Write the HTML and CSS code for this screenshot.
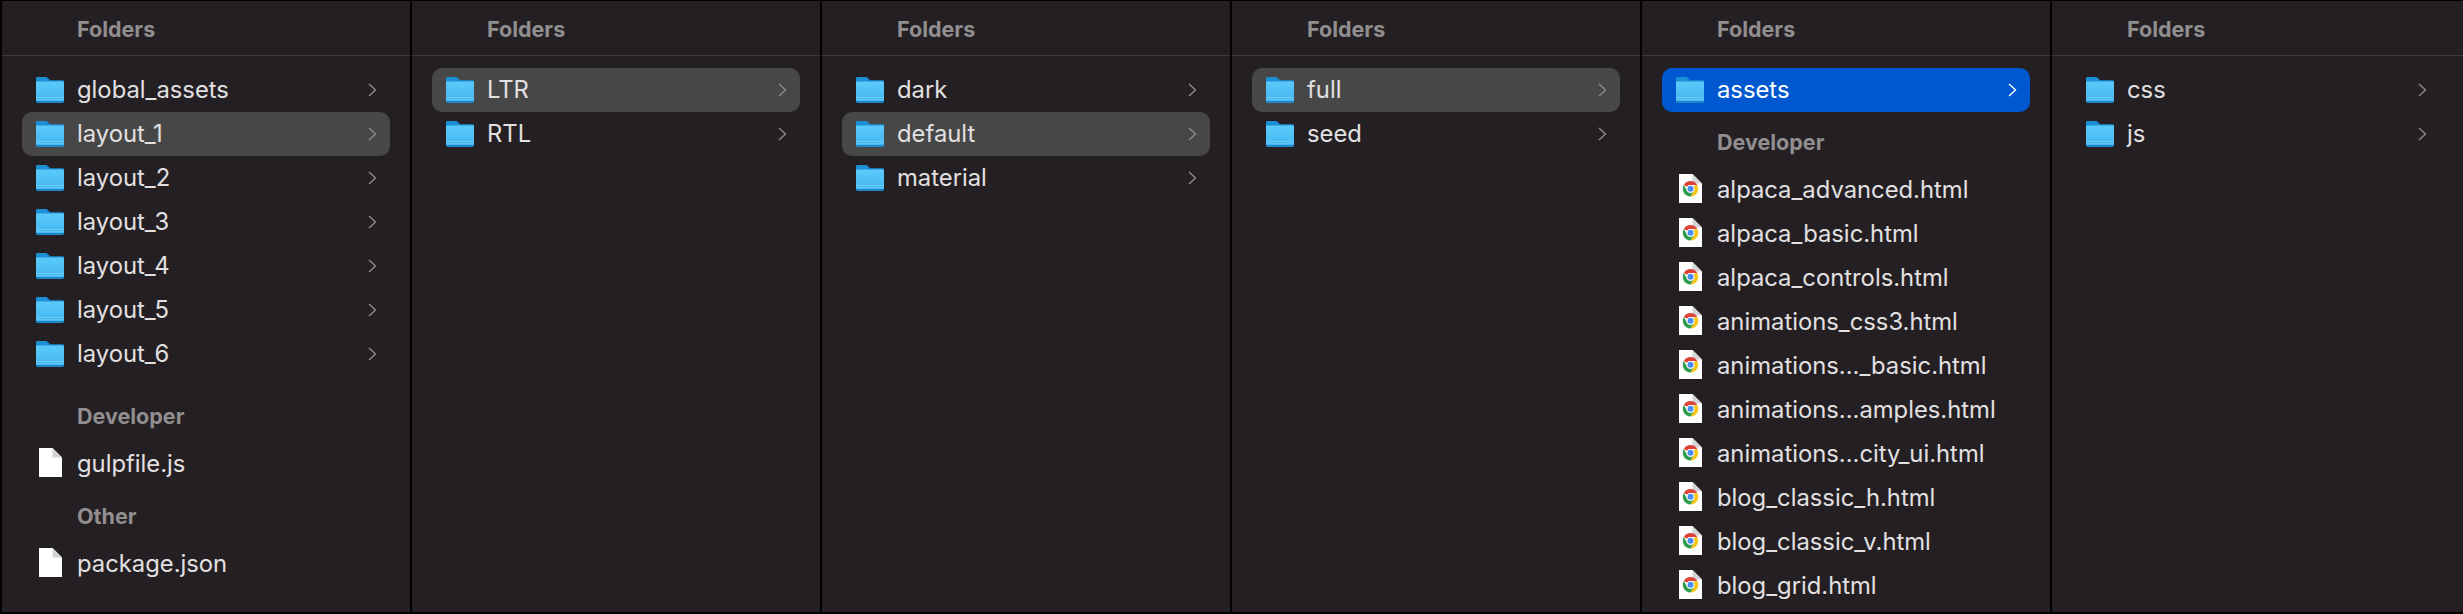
FILE: index.html
```html
<!DOCTYPE html>
<html lang="en">
<head>
<meta charset="utf-8">
<title>Folders</title>
<link rel="stylesheet" href="styles.css">
</head>
<body>
<svg class="defs" width="0" height="0" aria-hidden="true">
  <defs>
    <linearGradient id="fg" x1="0" y1="0" x2="0" y2="1">
      <stop offset="0" stop-color="#5bcafa"/>
      <stop offset="1" stop-color="#43b6ef"/>
    </linearGradient>
    <symbol id="folder" viewBox="0 0 28 26">
      <path d="M1.5 0H9.5C10.6 0 11.2 .5 12 1.3L14 3.2H26.5C27.4 3.2 28 3.8 28 4.7V24C28 25.2 27.2 26 26 26H2C.8 26 0 25.2 0 24V1.5C0 .6 .6 0 1.5 0Z" fill="#1b8fd6"/>
      <path d="M0 5.6C0 5 .5 4.6 1 4.6H27C27.5 4.6 28 5 28 5.6V23.6C28 24.6 27.3 25.2 26.3 25.2H1.7C.7 25.2 0 24.6 0 23.6Z" fill="url(#fg)"/>
      <path d="M0 20.5H28M0 22.7H28" stroke="#86d8fb" stroke-width=".7" opacity=".75"/>
      <path d="M0 24.8H28" stroke="#1277b8" stroke-width="1.2"/>
    </symbol>
    <symbol id="doc" viewBox="0 0 23 29">
      <path d="M0 0H13.5L23 9.5V29H0Z" fill="#fff"/>
      <path d="M13.5 0V9.5H23Z" fill="#d4d4d4"/>
    </symbol>
    <symbol id="chrome" viewBox="0 0 23 29">
      <path d="M0 0H13.5L23 9.5V29H0Z" fill="#fff"/>
      <path d="M13.5 0V9.5H23Z" fill="#d4d4d4"/>
      <path d="M11.5 7A7.8 7.8 0 0 1 18.25 10.9H11.5A3.9 3.9 0 0 0 8.1 12.85L4.75 11A7.8 7.8 0 0 1 11.5 7Z" fill="#dc4437"/>
      <path d="M18.25 10.9A7.8 7.8 0 0 1 11.5 22.6L14.9 16.75A3.9 3.9 0 0 0 15.4 14.8A3.9 3.9 0 0 0 14 11.8Z" fill="#f5c518"/>
      <path d="M4.75 11L8.1 16.75A3.9 3.9 0 0 0 14.9 16.75L11.5 22.6A7.8 7.8 0 0 1 4.75 11Z" fill="#2f9e4f"/>
      <circle cx="11.5" cy="14.8" r="3.9" fill="#fff"/>
      <circle cx="11.5" cy="14.8" r="3" fill="#4a8df0"/>
    </symbol>
    <symbol id="chev" viewBox="0 0 9 14">
      <path d="M1 1L7.5 7L1 13" fill="none" stroke="currentColor" stroke-width="1.4"/>
    </symbol>
  </defs>
</svg>

<main class="browser">
  <section class="col">
    <h2 class="head">Folders</h2>
    <ul class="list">
      <li class="row"><svg class="ico"><use href="#folder"/></svg><span class="name">global_assets</span><svg class="chev"><use href="#chev"/></svg></li>
      <li class="row hover"><svg class="ico"><use href="#folder"/></svg><span class="name">layout_1</span><svg class="chev"><use href="#chev"/></svg></li>
      <li class="row"><svg class="ico"><use href="#folder"/></svg><span class="name">layout_2</span><svg class="chev"><use href="#chev"/></svg></li>
      <li class="row"><svg class="ico"><use href="#folder"/></svg><span class="name">layout_3</span><svg class="chev"><use href="#chev"/></svg></li>
      <li class="row"><svg class="ico"><use href="#folder"/></svg><span class="name">layout_4</span><svg class="chev"><use href="#chev"/></svg></li>
      <li class="row"><svg class="ico"><use href="#folder"/></svg><span class="name">layout_5</span><svg class="chev"><use href="#chev"/></svg></li>
      <li class="row"><svg class="ico"><use href="#folder"/></svg><span class="name">layout_6</span><svg class="chev"><use href="#chev"/></svg></li>
      <li class="group first">Developer</li>
      <li class="row"><svg class="file"><use href="#doc"/></svg><span class="name">gulpfile.js</span></li>
      <li class="group">Other</li>
      <li class="row"><svg class="file"><use href="#doc"/></svg><span class="name">package.json</span></li>
    </ul>
  </section>

  <section class="col">
    <h2 class="head">Folders</h2>
    <ul class="list">
      <li class="row hover"><svg class="ico"><use href="#folder"/></svg><span class="name">LTR</span><svg class="chev"><use href="#chev"/></svg></li>
      <li class="row"><svg class="ico"><use href="#folder"/></svg><span class="name">RTL</span><svg class="chev"><use href="#chev"/></svg></li>
    </ul>
  </section>

  <section class="col">
    <h2 class="head">Folders</h2>
    <ul class="list">
      <li class="row"><svg class="ico"><use href="#folder"/></svg><span class="name">dark</span><svg class="chev"><use href="#chev"/></svg></li>
      <li class="row hover"><svg class="ico"><use href="#folder"/></svg><span class="name">default</span><svg class="chev"><use href="#chev"/></svg></li>
      <li class="row"><svg class="ico"><use href="#folder"/></svg><span class="name">material</span><svg class="chev"><use href="#chev"/></svg></li>
    </ul>
  </section>

  <section class="col">
    <h2 class="head">Folders</h2>
    <ul class="list">
      <li class="row hover"><svg class="ico"><use href="#folder"/></svg><span class="name">full</span><svg class="chev"><use href="#chev"/></svg></li>
      <li class="row"><svg class="ico"><use href="#folder"/></svg><span class="name">seed</span><svg class="chev"><use href="#chev"/></svg></li>
    </ul>
  </section>

  <section class="col">
    <h2 class="head">Folders</h2>
    <ul class="list">
      <li class="row active"><svg class="ico"><use href="#folder"/></svg><span class="name">assets</span><svg class="chev"><use href="#chev"/></svg></li>
      <li class="group">Developer</li>
      <li class="row"><svg class="file"><use href="#chrome"/></svg><span class="name">alpaca_advanced.html</span></li>
      <li class="row"><svg class="file"><use href="#chrome"/></svg><span class="name">alpaca_basic.html</span></li>
      <li class="row"><svg class="file"><use href="#chrome"/></svg><span class="name">alpaca_controls.html</span></li>
      <li class="row"><svg class="file"><use href="#chrome"/></svg><span class="name">animations_css3.html</span></li>
      <li class="row"><svg class="file"><use href="#chrome"/></svg><span class="name">animations..._basic.html</span></li>
      <li class="row"><svg class="file"><use href="#chrome"/></svg><span class="name">animations...amples.html</span></li>
      <li class="row"><svg class="file"><use href="#chrome"/></svg><span class="name">animations...city_ui.html</span></li>
      <li class="row"><svg class="file"><use href="#chrome"/></svg><span class="name">blog_classic_h.html</span></li>
      <li class="row"><svg class="file"><use href="#chrome"/></svg><span class="name">blog_classic_v.html</span></li>
      <li class="row"><svg class="file"><use href="#chrome"/></svg><span class="name">blog_grid.html</span></li>
    </ul>
  </section>

  <section class="col">
    <h2 class="head">Folders</h2>
    <ul class="list">
      <li class="row"><svg class="ico"><use href="#folder"/></svg><span class="name">css</span><svg class="chev"><use href="#chev"/></svg></li>
      <li class="row"><svg class="ico"><use href="#folder"/></svg><span class="name">js</span><svg class="chev"><use href="#chev"/></svg></li>
    </ul>
  </section>
</main>
</body>
</html>
```

FILE: styles.css
```css
* { box-sizing: border-box; }
html, body { margin: 0; padding: 0; height: 100%; background: #000; overflow: hidden; }
body { font-family: Inter, "Liberation Sans", sans-serif; }
.defs { display: block; height: 0; }

.browser {
  display: grid;
  grid-template-columns: repeat(5, 410px) 1fr;
  width: 2463px;
  height: 614px;
  padding: 1px 0 2px 2px;
  background: #000;
}
.col {
  background: #241f23;
  border-right: 2px solid #000;
  overflow: hidden;
  min-width: 0;
}
.col:last-child { border-right: 0; }
.col:last-child .list { padding-right: 23px; }

.head {
  margin: 0;
  height: 55px;
  padding: 16px 0 0 75px;
  border-bottom: 1px solid #3d3a3d;
  font-size: 21.5px;
  line-height: 24px;
  font-weight: 700;
  color: #918e8f;
}
.list { list-style: none; margin: 0; padding: 12px 20px 0; }

.row {
  display: flex;
  align-items: center;
  height: 44px;
  padding: 0 13px 0 14px;
  border-radius: 10px;
  color: #e2e0e1;
  font-size: 23.8px;
}
.row.hover { background: #474747; }
.row.active { background: #0058d0; color: #fff; }

.ico { flex: none; width: 28px; height: 26px; margin-right: 13px; }
.file { flex: none; width: 23px; height: 29px; margin: -3px 15px 0 3px; }
.name { flex: 1; white-space: nowrap; line-height: 28px; margin-top: -1px; }
.chev { flex: none; width: 9px; height: 14px; color: #8c8a8b; }
.row.active .chev { color: #fff; }

.group {
  height: 56px;
  padding: 18px 0 0 55px;
  font-size: 21.5px;
  line-height: 24px;
  font-weight: 700;
  color: #918e8f;
}
.group.first { height: 66px; padding-top: 28px; }
```
